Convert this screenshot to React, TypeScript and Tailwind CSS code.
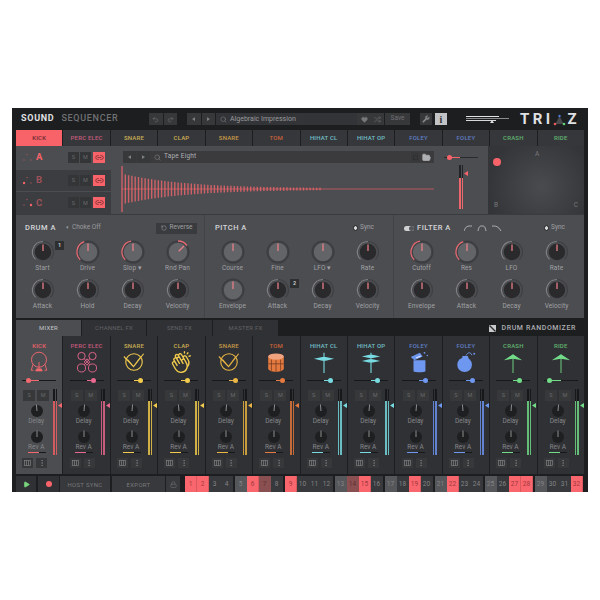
import React from "react";
import { PiHandsClapping } from "react-icons/pi";
import { Undo2, Redo2, Search, Heart, Shuffle, Wrench, Play, Lock, FolderOpen, Link2, RotateCcw, EllipsisVertical } from "lucide-react";

const RED = "#f8636a";

function polar(cx: number, cy: number, r: number, a: number) {
  const t = ((a - 90) * Math.PI) / 180;
  return [cx + r * Math.cos(t), cy + r * Math.sin(t)];
}
function arc(cx: number, cy: number, r: number, a0: number, a1: number) {
  const [x0, y0] = polar(cx, cy, r, a0);
  const [x1, y1] = polar(cx, cy, r, a1);
  return `M${x0} ${y0}A${r} ${r} 0 ${a1 - a0 > 180 ? 1 : 0} 1 ${x1} ${y1}`;
}

function Knob({ kind, value = 0, redFrom, redTo }: { kind: "dark" | "gray"; value?: number; redFrom?: number; redTo?: number }) {
  const [x1, y1] = polar(12, 12, kind === "gray" ? 8.5 : 7.5, value);
  const [x0, y0] = polar(12, 12, 1, value);
  return (
    <svg width="24" height="24" viewBox="0 0 24 24" className="block">
      {kind === "gray" ? (
        <>
          <circle cx="12" cy="12" r="10.8" fill="none" stroke="#3c3d40" strokeWidth="1.4" />
          <circle cx="12" cy="12" r="9.4" fill="#636468" />
          <circle cx="12" cy="12" r="9.8" fill="none" stroke="#404144" strokeWidth="1" />
        </>
      ) : (
        <>
          <path d={arc(12, 12, 10.5, -135, 135)} fill="none" stroke="#3f4043" strokeWidth="1.2" />
          <path d={arc(12, 12, 10.5, -135, 0)} fill="none" stroke="#808185" strokeWidth="1.2" />
          <circle cx="12" cy="12" r="8.2" fill="#2a2a2d" />
        </>
      )}
      {redFrom !== undefined && <path d={arc(12, 12, 11, redFrom, redTo ?? 0)} fill="none" stroke="#e96b73" strokeWidth="1.3" />}
      <line x1={x0} y1={y0} x2={x1} y2={y1} stroke="#e87f88" strokeWidth="1.3" />
    </svg>
  );
}

function Labeled({ label, children, badge }: { label: string; children: React.ReactNode; badge?: string }) {
  return (
    <div className="relative flex flex-col items-center">
      {children}
      <div className="h-[8px] leading-[8px] text-[6.5px] tracking-[0.1px] text-[#a0a1a4] whitespace-nowrap">{label}</div>
      {badge && (
        <div className="absolute left-[35px] top-[1px] w-[9px] h-[9px] bg-[#2e2f31] text-[5.5px] leading-[9px] text-center text-[#c4c5c7] font-bold">{badge}</div>
      )}
    </div>
  );
}

type K = { l: string; kind: "dark" | "gray"; v?: number; f?: number; t?: number; b?: string };

function KnobGrid({ items }: { items: K[] }) {
  return (
    <div className="grid grid-cols-4 w-[180px] gap-y-[6px]">
      {items.map((k, i) => (
        <Labeled key={i} label={k.l} badge={k.b}>
          <Knob kind={k.kind} value={k.v ?? 0} redFrom={k.f} redTo={k.t} />
        </Labeled>
      ))}
    </div>
  );
}

function Btn({ className = "", children }: { className?: string; children?: React.ReactNode }) {
  return <div className={`flex items-center justify-center bg-[#37383a] text-[#6f7073] ${className}`}>{children}</div>;
}

function Tri({ dir = "left", color = "#808184", size = 4 }: { dir?: "left" | "right"; color?: string; size?: number }) {
  return (
    <svg width={size} height={size + 1} viewBox="0 0 4 5" className="block">
      <polygon points={dir === "left" ? "4,0 4,5 0,2.5" : "0,0 0,5 4,2.5"} fill={color} />
    </svg>
  );
}

function Sync() {
  return (
    <div className="flex items-center gap-[3px] text-[6.5px] text-[#a0a1a4]">
      <div className="w-[3.5px] h-[3.5px] rounded-full bg-[#d8d9db] outline outline-[1.5px] outline-[#333436]" />
      Sync
    </div>
  );
}

const tabs = [
  ["KICK", "#6e2a2f"],
  ["PERC ELEC", "#c45a7c"],
  ["SNARE", "#c9ad55"],
  ["CLAP", "#cfb055"],
  ["SNARE", "#c89a48"],
  ["TOM", "#c4613a"],
  ["HIHAT CL", "#70bfc7"],
  ["HIHAT OP", "#70bfc7"],
  ["FOLEY", "#5f7dc6"],
  ["FOLEY", "#5f7dc6"],
  ["CRASH", "#60b370"],
  ["RIDE", "#60b370"],
];

function Wave() {
  const bars: string[] = [];
  let x = 1;
  let i = 0;
  while (x < 200) {
    const env = i === 0 ? 23 : 15 * Math.exp(-x / 62) + 0.6;
    bars.push(`M${x.toFixed(1)} ${24 - env}V${24 + env}`);
    x += 3.3;
    i++;
  }
  return (
    <svg width="313" height="48" viewBox="0 0 313 48" className="block">
      <line x1="1" y1="24" x2="313" y2="24" stroke="#b4565c" strokeWidth="1.2" />
      <path d={bars.join("")} stroke="#ee666d" strokeWidth="1.4" fill="none" opacity="0.8" />
    </svg>
  );
}

function ABCRow({ letter, active, dots }: { letter: string; active?: boolean; dots: number }) {
  const pts = [[4, 1.5], [1, 7], [8, 7]];
  return (
    <div className={`h-[22.5px] flex items-center pl-[7px] ${active ? "bg-[#4c4d51]" : "bg-[#3c3d40] border-t border-[#4c4d51]"}`}>
      <svg width="10" height="9" viewBox="0 0 10 9" className="block">
        {pts.map((p, i) => (
          <circle key={i} cx={p[0]} cy={p[1]} r={i === dots ? 1.2 : 0.7} fill={i === dots ? RED : "#a2555a"} />
        ))}
      </svg>
      <div className={`ml-[3px] w-[29px] text-[9.5px] font-bold ${active ? "text-[#f8636a]" : "text-[#a0525a]"}`}>{letter}</div>
      <div className="flex gap-[1px] ml-[3px]">
        <Btn className="w-[11px] h-[11px] bg-[#343537] text-[5.5px] text-[#68696c]">S</Btn>
        <Btn className="w-[11px] h-[11px] bg-[#343537] text-[5.5px] text-[#68696c]">M</Btn>
        <div className="w-[12px] h-[11px] ml-[1px] bg-[#f8636a] flex items-center justify-center text-[#6b2b2f]">
          <Link2 size={9} strokeWidth={2} />
        </div>
      </div>
    </div>
  );
}

function ChannelIcon({ n, c }: { n: number; c: string }) {
  const s = { width: 22, height: 22, viewBox: "0 0 24 24", className: "block", fill: "none", stroke: c, strokeWidth: 1 };
  switch (n) {
    case 0:
      return (
        <svg {...s}>
          <circle cx="12" cy="9.5" r="8.2" />
          <path d="M5.5 14.5L3.5 21H6M18.5 14.5L20.5 21H18M12 12v7M8.5 21.5h7" />
          <path d="M9.5 19.5h5l1 2h-7z" fill={c} />
        </svg>
      );
    case 1:
      return (
        <svg {...s}>
          <circle cx="6" cy="5.5" r="4" />
          <circle cx="18" cy="5.5" r="4" />
          <circle cx="6" cy="18.5" r="4.4" />
          <circle cx="18" cy="18.5" r="4.4" />
          <path d="M9 8.5L15 15M15 8.5L9 15M12 8.5l3 3.5-3 3.5-3-3.5z" />
        </svg>
      );
    case 2:
    case 4:
      return (
        <svg {...s}>
          <circle cx="12" cy="12" r="9" strokeWidth="1.2" />
          <path d="M1 6L11.5 17L22.5 3M5 9.5L11.5 17L19 7" strokeWidth="1.2" />
        </svg>
      );
    case 3:
      return <PiHandsClapping size={22} color={c} className="block" />;
    case 5:
      return (
        <svg {...s} stroke="none">
          <path d="M3.5 6h17v13c0 2-3.5 3.5-8.5 3.5S3.5 21 3.5 19z" fill={c} />
          <ellipse cx="12" cy="6" rx="8.5" ry="3.4" fill="#efa37e" />
          <path d="M7 9.5v12M12 10v12.5M17 9.5v12M3.5 14h17" stroke="#7a3d22" strokeWidth="0.9" />
        </svg>
      );
    case 6:
      return (
        <svg {...s} strokeWidth="1.2">
          <path d="M1 8.5L10 6.5h4l9 2-9 2h-4z" fill={c} stroke="none" />
          <path d="M12 2v22" />
        </svg>
      );
    case 7:
      return (
        <svg {...s} strokeWidth="1.2">
          <path d="M2 6L10 4h4l8 2-8 1.5h-4z" fill={c} stroke="none" />
          <path d="M2 11L10 9h4l8 2-8 1.5h-4z" fill={c} stroke="none" />
          <path d="M12 2v22" />
        </svg>
      );
    case 8:
      return (
        <svg {...s} stroke="none">
          <path d="M6 10h13v12c-1 1.5-12 1.5-13 0z" fill={c} />
          <path d="M3 6.5l10-4.5 3 4-9 4z" fill={c} />
          <circle cx="18" cy="2" r="1" fill={c} />
          <circle cx="21" cy="5" r="0.8" fill={c} />
          <path d="M9 7.5l5-2" stroke="#d7e2ff" strokeWidth="1.2" />
        </svg>
      );
    case 9:
      return (
        <svg {...s} stroke="none">
          <circle cx="10.5" cy="15" r="8" fill={c} />
          <path d="M8 5.5h6l1 3-7 1z" fill={c} />
          <path d="M12 5C14 1 17 1 18.5 4.5" stroke={c} strokeWidth="1" fill="none" />
          <circle cx="21" cy="3" r="1" fill={c} />
        </svg>
      );
    default:
      return (
        <svg {...s} strokeWidth="1">
          <path d="M2 10L12 3.5 22 10 12 8.5z" fill={c} stroke="none" />
          <path d="M12 4v20" />
        </svg>
      );
  }
}

const strips = [
  { l: "KICK", c: "#f4686f", lc: "#e8636b", pos: 6, from: 17 },
  { l: "PERC ELEC", c: "#e8688f", lc: "#c45a7c", pos: 23, from: 17 },
  { l: "SNARE", c: "#f2cb4e", lc: "#c9ad55", pos: 23, from: 17 },
  { l: "CLAP", c: "#f2cb4e", lc: "#cfb055", pos: 23, from: 17 },
  { l: "SNARE", c: "#e9b544", lc: "#c89a48", pos: 23, from: 17 },
  { l: "TOM", c: "#e47a3f", lc: "#c4613a", pos: 23, from: 17 },
  { l: "HIHAT CL", c: "#78dbe2", lc: "#70bfc7", pos: 23, from: 17 },
  { l: "HIHAT OP", c: "#78dbe2", lc: "#70bfc7", pos: 23, from: 17 },
  { l: "FOLEY", c: "#6e97f0", lc: "#5f7dc6", pos: 23, from: 17 },
  { l: "FOLEY", c: "#6e97f0", lc: "#5f7dc6", pos: 23, from: 17 },
  { l: "CRASH", c: "#72dc88", lc: "#60b370", pos: 23, from: 17 },
  { l: "RIDE", c: "#72dc88", lc: "#60b370", pos: 5, from: 17 },
];

function MiniKnob({ v = 0 }: { v?: number }) {
  const [x1, y1] = polar(7, 7, 6.5, v);
  return (
    <svg width="14" height="14" viewBox="0 0 14 14" className="block">
      <circle cx="7" cy="7" r="6" fill="#1e1f21" />
      <line x1="7" y1="7" x2={x1} y2={y1} stroke="#8d8e91" strokeWidth="1" />
    </svg>
  );
}

function Strip({ s, n }: { s: (typeof strips)[number]; n: number }) {
  const lo = Math.min(s.pos, s.from);
  const hi = Math.max(s.pos, s.from);
  return (
    <div className={`h-full flex flex-col items-center ${n === 0 ? "bg-[#4c4d51]" : "bg-[#303134]"}`}>
      <div className="h-[14px] flex items-end text-[6px] tracking-[0.2px] leading-[8px] font-medium whitespace-nowrap" style={{ color: s.lc }}>{s.l}</div>
      <div className="h-[22px] mt-[1px]"><ChannelIcon n={n} c={s.c} /></div>
      <div className="relative w-[34px] h-[1px] bg-[#17181a] mt-[7px]">
        <div className="absolute top-0 h-[1px]" style={{ left: lo, width: hi - lo, backgroundColor: s.c }} />
        <div className="absolute top-[-2px] w-[5px] h-[5px] rounded-full" style={{ left: s.pos - 2, backgroundColor: s.c }} />
      </div>
      <div className="flex w-[34px] mt-[8px] h-[66px] translate-x-[1px]">
        <div className="w-[27px] flex flex-col items-center">
          <div className="flex gap-[2px] mt-[1px] w-[27px]">
            <Btn className={`w-[12px] h-[11px] text-[5.5px] text-[#68696c] ${n === 0 ? "bg-[#3d3e41]" : "bg-[#3a3b3e]"}`}>S</Btn>
            <Btn className={`w-[12px] h-[11px] text-[5.5px] text-[#68696c] ${n === 0 ? "bg-[#3d3e41]" : "bg-[#3a3b3e]"}`}>M</Btn>
          </div>
          <div className="mt-[3px]"><MiniKnob v={n % 3 === 0 ? -5 : 5} /></div>
          <div className="text-[6.5px] leading-[8px] text-[#85868a] -ml-[1px] -mt-[1px]">Delay</div>
          <div className="mt-[5px]"><MiniKnob /></div>
          <div className="text-[6.5px] leading-[8px] text-[#85868a] -ml-[1px] -mt-[1px]">Rev A</div>
          <div className="w-[18px] h-[1px] mt-[1px] bg-[#17181a]">
            <div className="w-[11px] h-[1px]" style={{ backgroundColor: s.c }} />
          </div>
        </div>
        <div className="flex-1 flex h-full relative justify-center pl-[3px]">
          <div className="flex gap-[1px] h-full">
            {[0, 1].map((b) => (
              <div key={b} className="w-[1.5px] h-full flex flex-col bg-[#17181a]">
                <div className="h-[12px]" />
                <div className="flex-1" style={{ backgroundColor: s.c, opacity: 0.85 }} />
              </div>
            ))}
          </div>
          <div className="absolute right-[-5px] top-[14px]"><Tri color={s.c} /></div>
        </div>
      </div>
      <div className="flex gap-[3px] w-[34px] mt-[3px]">
        <Btn className="w-[11px] h-[10px] bg-[#3d3e41]">
          <svg width="7" height="6" viewBox="0 0 7 6" className="block">
            <rect x="0.5" y="0.5" width="6" height="5" fill="none" stroke="#808184" strokeWidth="0.7" />
            <path d="M2.5 0.5v5M4.5 0.5v5" stroke="#808184" strokeWidth="0.7" />
          </svg>
        </Btn>
        <Btn className="w-[11px] h-[10px] bg-[#3d3e41] text-[#808184]">
          <EllipsisVertical size={8} />
        </Btn>
      </div>
    </div>
  );
}

const active = new Set([1, 2, 6, 9, 15, 19, 22, 27, 28, 32]);
const dim = new Set([7, 14]);

function Step({ n }: { n: number }) {
  const first = (n - 1) % 4 === 0;
  const cls = active.has(n)
    ? "bg-[#fa666d] text-[#a0383e] border-[#d9595f]"
    : dim.has(n)
    ? "bg-[#8a4f51] text-[#5c3233] border-[#8a4f51]"
    : first
    ? "bg-[#56575a] text-[#838487] border-[#56575a]"
    : "bg-[#38393c] text-[#838487] border-[#38393c]";
  return <div className={`w-[12px] h-[16px] border-r text-[6.5px] leading-[16px] text-center ${cls}`}>{n}</div>;
}

export default function App() {
  return (
    <div className="w-[600px] h-[600px] bg-white pt-[108px] pl-[12px] font-[Roboto,sans-serif]">
      <div className="w-[576px] h-[384px] bg-[#1d1e20] px-[4px] flex flex-col">
        {/* top bar */}
        <div className="h-[22px] flex items-center shrink-0">
          <div className="w-[133px] pl-[5px] flex items-baseline text-[9px] tracking-[0.7px]">
            <span className="text-[#e0e1e3] font-bold">SOUND</span>
            <span className="text-[#707174] font-medium ml-[7px]">SEQUENCER</span>
          </div>
          <div className="flex gap-[1px]">
            <Btn className="w-[13.5px] h-[12px]"><Undo2 size={7} /></Btn>
            <Btn className="w-[13.5px] h-[12px]"><Redo2 size={7} /></Btn>
          </div>
          <div className="flex ml-[10px] gap-[1px]">
            <Btn className="w-[13.5px] h-[12px]"><Tri size={3} /></Btn>
            <Btn className="w-[13.5px] h-[12px]"><Tri dir="right" size={3} /></Btn>
          </div>
          <div className="w-[141px] h-[12px] bg-[#333437] flex items-center pl-[4px] ml-[1px] text-[#77787b]">
            <Search size={7} />
            <span className="ml-[3px] text-[7px] text-[#9a9b9e]">Algebraic Impression</span>
          </div>
          <Btn className="w-[14px] h-[12px]"><Heart size={7} fill="#77787b" /></Btn>
          <Btn className="w-[13px] h-[12px]"><Shuffle size={7} /></Btn>
          <Btn className="w-[25px] h-[12px] ml-[1px] text-[6.5px]">Save</Btn>
          <Btn className="w-[12px] h-[12px] ml-[10px]"><Wrench size={8} fill="#8a8b8d" /></Btn>
          <div className="w-[12px] h-[12px] ml-[3px] bg-[#c2c3c5] flex items-center justify-center text-[#333437] text-[10px] font-bold font-['Liberation_Serif',serif]">
            i
          </div>
          <div className="w-[43px] ml-[19px] relative h-[8px]">
            <div className="h-[1px] w-[33px] bg-[#e2e3e5] mt-[1px]" />
            <div className="h-[1px] w-[43px] bg-[#8b8c8e] mt-[1px]" />
            <div className="h-[1px] w-[30px] bg-[#d8d9db] mt-[1px]" />
            <div className="absolute left-[24px] top-[5px] w-0 h-0 border-x-[2px] border-b-[3px] border-x-transparent border-b-[#dfe0e2]" />
          </div>
          <div className="ml-[11px] flex items-center text-[15px] leading-[15px] font-bold text-[#e0e1e3] tracking-[3.4px] whitespace-nowrap">
            TRI
            <svg width="13" height="13" viewBox="0 0 13 13" className="block -ml-[1px] mr-[2px]">
              <polygon points="6.5,3 2.5,11 10.5,11" fill="#4a4b4f" />
              <circle cx="6.5" cy="3" r="1.2" fill="#4c79d8" />
              <circle cx="2" cy="11" r="1.3" fill="#f0585f" />
              <circle cx="11" cy="11" r="1.3" fill="#5fd27a" />
            </svg>
            Z
          </div>
        </div>
        {/* tabs */}
        <div className="grid grid-cols-12 h-[16px] gap-[1px] shrink-0">
          {tabs.map(([t, c], i) => (
            <div key={i} className={`text-center text-[6px] tracking-[0.2px] leading-[16px] font-medium whitespace-nowrap ${i === 0 ? "bg-[#f8636a]" : "bg-[#36373a]"}`} style={{ color: c }}>{t}</div>
          ))}
        </div>
        {/* upper */}
        <div className="h-[68px] flex shrink-0 bg-[#4c4d51]">
          <div className="w-[95px] shrink-0">
            <ABCRow letter="A" active dots={-1} />
            <ABCRow letter="B" dots={1} />
            <ABCRow letter="C" dots={2} />
          </div>
          <div className="w-[323px] shrink-0 pl-[10px]">
            <div className="flex h-[12px] mt-[5px] ml-[2px] w-[311px] bg-[#3b3b3e] items-center">
              <Btn className="w-[13px] h-[12px] bg-[#37383a]"><Tri size={3} /></Btn>
              <Btn className="w-[13px] h-[12px] bg-[#37383a] ml-[1px]"><Tri dir="right" size={3} /></Btn>
              <Search size={7} className="text-[#808184] ml-[4px]" />
              <span className="ml-[3px] text-[6.5px] text-[#aeafb2] tracking-[0.2px]">Tape Eight</span>
              <div className="flex-1" />
              <Btn className="w-[9px] h-[10px] bg-[#5a5b5e] mr-[2px]"><div className="w-[5px] h-[5px] border border-[#2f3032]" /></Btn>
              <div className="mr-[3px] text-[#aeafb2]"><FolderOpen size={9} fill="#aeafb2" /></div>
            </div>
            <div className="mt-[2px]"><Wave /></div>
          </div>
          <div className="w-[54px] shrink-0 pl-[10px] flex flex-col items-start">
            <div className="relative w-[34px] h-[1px] bg-[#2a2b2d] mt-[11px]">
              <div className="absolute left-[5px] top-0 w-[11px] h-[1px] bg-[#f8636a]" />
              <div className="absolute left-[3px] top-[-2px] w-[5px] h-[5px] rounded-full bg-[#f8636a]" />
            </div>
            <div className="flex gap-[1px] h-[44px] mt-[7px] ml-[15px] relative">
              {[0, 1].map((i) => (
                <div key={i} className="w-[1.5px] h-full bg-[#222325] flex flex-col">
                  <div className="h-[13px]" />
                  <div className="flex-1 bg-[#ef666d]" />
                </div>
              ))}
              <div className="absolute left-[5px] top-[6px]"><Tri color="#f8636a" /></div>
            </div>
          </div>
          <div className="w-[96px] shrink-0 bg-[radial-gradient(circle_at_55%_60%,#4a4b4e,#343538_80%)] flex flex-col justify-between px-[5px] py-[3px] text-[6.5px] text-[#77787b]">
            <div className="relative">
              <div className="w-[8px] h-[8px] rounded-full bg-[#f8636a] mt-[9px]" />
              <span className="absolute left-[42px] top-[1px]">A</span>
            </div>
            <div className="flex justify-between px-[1px]"><span>B</span><span>C</span></div>
          </div>
        </div>
        {/* knobs */}
        <div className="h-[104px] flex bg-[#4c4d51] border-t border-[#3a3b3e] shrink-0">
          <div className="w-[189px] border-r border-[#424347] px-[4px]">
            <div className="h-[25px] flex items-center pl-[5px] pt-[1px]">
              <span className="text-[7.5px] font-medium text-[#d4d5d8] tracking-[0.5px] w-[41px]">DRUM A</span>
              <span className="text-[6.5px] text-[#9a9b9e] flex items-center gap-[2px]">
                <span className="text-[5px]">▾</span>
                <span className="ml-[1px]">Choke Off</span>
              </span>
              <div className="flex-1" />
              <div className="w-[41px] h-[11px] bg-[#3a3b3e] flex items-center justify-center gap-[3px] text-[6.5px] text-[#a0a1a4] mr-[3px]">
                <RotateCcw size={6} /> Reverse
              </div>
            </div>
            <KnobGrid
              items={[
                { l: "Start", kind: "dark", b: "1" },
                { l: "Drive", kind: "gray", f: -135, t: -20 },
                { l: "Slop ▾", kind: "gray", f: -135, t: -10 },
                { l: "Rnd Pan", kind: "gray", v: 45, f: 0, t: 55 },
                { l: "Attack", kind: "dark" },
                { l: "Hold", kind: "dark" },
                { l: "Decay", kind: "dark" },
                { l: "Velocity", kind: "dark" },
              ]}
            />
          </div>
          <div className="w-[189px] border-r border-[#424347] px-[5px]">
            <div className="h-[25px] flex items-center pl-[5px] pt-[1px]">
              <span className="text-[7.5px] font-medium text-[#d4d5d8] tracking-[0.5px]">PITCH A</span>
              <div className="flex-1" />
              <div className="mr-[14px]"><Sync /></div>
            </div>
            <KnobGrid
              items={[
                { l: "Course", kind: "gray" },
                { l: "Fine", kind: "gray" },
                { l: "LFO ▾", kind: "gray" },
                { l: "Rate", kind: "dark" },
                { l: "Envelope", kind: "gray" },
                { l: "Attack", kind: "dark", b: "2" },
                { l: "Decay", kind: "dark" },
                { l: "Velocity", kind: "dark" },
              ]}
            />
          </div>
          <div className="flex-1 px-[5px]">
            <div className="h-[25px] flex items-center pl-[5px] pt-[1px]">
              <div className="w-[10px] h-[5px] rounded-full bg-[#d0d1d3] flex justify-end">
                <div className="w-[5px] h-[5px] rounded-full bg-[#55565a]" />
              </div>
              <span className="ml-[3px] text-[7.5px] font-medium text-[#d4d5d8] tracking-[0.5px] w-[47px] whitespace-nowrap">FILTER A</span>
              <svg width="38" height="7" viewBox="0 0 38 7" className="block" fill="none" stroke="#c8c9cb" strokeWidth="0.8">
                <path d="M0 6C2 1 3 1 8 1" />
                <path d="M14 6C15 1 16 1 18 1S21 1 22 6" />
                <path d="M28 1C32 1 34 1 37 6" />
              </svg>
              <div className="flex-1" />
              <div className="mr-[14px]"><Sync /></div>
            </div>
            <KnobGrid
              items={[
                { l: "Cutoff", kind: "gray", f: -135, t: -10 },
                { l: "Res", kind: "gray", f: -135, t: -20 },
                { l: "LFO", kind: "dark" },
                { l: "Rate", kind: "dark" },
                { l: "Envelope", kind: "dark" },
                { l: "Attack", kind: "dark" },
                { l: "Decay", kind: "dark" },
                { l: "Velocity", kind: "dark" },
              ]}
            />
          </div>
        </div>
        {/* mixer tabs */}
        <div className="h-[16px] mt-[2px] flex items-stretch gap-[1px] shrink-0">
          <div className="w-[65px] bg-[#4c4d51] text-center text-[6px] tracking-[0.2px] leading-[16px] text-[#c2c3c6]">MIXER</div>
          <div className="w-[64px] bg-[#303134] text-center text-[6px] tracking-[0.2px] leading-[16px] text-[#606164]">CHANNEL FX</div>
          <div className="w-[65px] bg-[#303134] text-center text-[6px] tracking-[0.2px] leading-[16px] text-[#606164]">SEND FX</div>
          <div className="w-[65px] bg-[#303134] text-center text-[6px] tracking-[0.2px] leading-[16px] text-[#606164]">MASTER FX</div>
          <div className="flex-1 flex items-center justify-end pr-[8px]">
            <svg width="7" height="7" viewBox="0 0 7 7" className="block mr-[5px]">
              <rect width="7" height="7" fill="#c9cacc" />
              <path d="M0.5 0.5L6.5 6.5" stroke="#333437" strokeWidth="1.4" />
            </svg>
            <span className="text-[7px] font-medium text-[#aeafb2] tracking-[0.6px]">DRUM RANDOMIZER</span>
          </div>
        </div>
        {/* mixer */}
        <div className="h-[138px] grid grid-cols-12 gap-[1px] shrink-0">
          {strips.map((s, i) => (
            <Strip key={i} s={s} n={i} />
          ))}
        </div>
        {/* bottom */}
        <div className="h-[16px] mt-[2px] flex shrink-0">
          <Btn className="w-[20px] bg-[#303134]"><Play size={7} fill="#7ad77e" color="#7ad77e" /></Btn>
          <Btn className="w-[21px] ml-[2px] bg-[#303134]"><div className="w-[6px] h-[6px] rounded-full bg-[#f8636a]" /></Btn>
          <Btn className="w-[50px] ml-[1px] bg-[#38393c] text-[6px] text-[#77787b] tracking-[0.3px]">HOST SYNC</Btn>
          <Btn className="w-[53px] ml-[2px] bg-[#38393c] text-[6px] text-[#77787b] tracking-[0.3px]">EXPORT</Btn>
          <Btn className="w-[14px] ml-[1px] bg-[#38393c]"><Lock size={7} /></Btn>
          <div className="flex gap-[2px] ml-[5px]">
            {[0, 1, 2, 3, 4, 5, 6, 7].map((g) => (
              <div key={g} className="flex">
                {[1, 2, 3, 4].map((k) => (
                  <Step key={k} n={g * 4 + k} />
                ))}
              </div>
            ))}
          </div>
        </div>
      </div>
    </div>
  );
}
